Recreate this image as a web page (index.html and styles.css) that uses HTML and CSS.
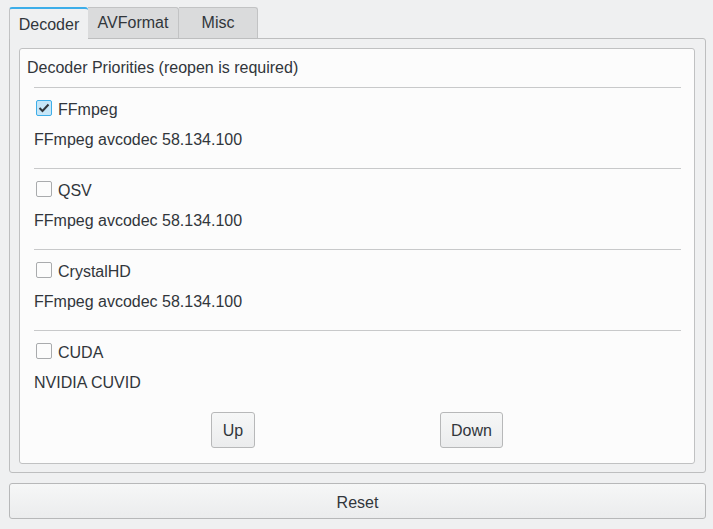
FILE: index.html
```html
<!DOCTYPE html>
<html>
<head>
<meta charset="utf-8">
<link rel="stylesheet" href="styles.css">
</head>
<body>
<div class="tabbar">
  <div class="tab active">Decoder</div>
  <div class="tab">AVFormat</div>
  <div class="tab misc">Misc</div>
</div>
<div class="panel">
  <div class="group">
    <div class="title">Decoder Priorities (reopen is required)</div>
    <div class="list">
      <div class="item">
        <div class="row"><span class="cb checked"><svg width="12" height="10" viewBox="0 0 12 10"><path d="M1.5 5 L4.5 8 L10.5 1.5" fill="none" stroke="#31363b" stroke-width="2"/></svg></span><span class="label">FFmpeg</span></div>
        <div class="desc">FFmpeg avcodec 58.134.100</div>
      </div>
      <div class="item">
        <div class="row"><span class="cb"></span><span class="label">QSV</span></div>
        <div class="desc">FFmpeg avcodec 58.134.100</div>
      </div>
      <div class="item">
        <div class="row"><span class="cb"></span><span class="label">CrystalHD</span></div>
        <div class="desc">FFmpeg avcodec 58.134.100</div>
      </div>
      <div class="item last">
        <div class="row"><span class="cb"></span><span class="label">CUDA</span></div>
        <div class="desc">NVIDIA CUVID</div>
      </div>
    </div>
    <div class="buttons">
      <button class="btn up">Up</button>
      <button class="btn down">Down</button>
    </div>
  </div>
</div>
<button class="btn reset">Reset</button>
</body>
</html>
```
FILE: styles.css
```css
html, body {
  margin: 0;
  padding: 0;
  background: #eff0f1;
  font-family: "Liberation Sans", Arial, sans-serif;
  font-size: 16px;
  color: #31363b;
}
.tabbar {
  display: flex;
  padding: 7px 0 0 9px;
  height: 31px;
}
.tab {
  height: 31px;
  box-sizing: border-box;
  padding: 0;
  width: 91px;
  display: flex;
  align-items: center;
  justify-content: center;
  background: #dadbdc;
  border: 1px solid #c2c3c4;
  border-bottom: none;
  border-left: none;
  border-radius: 0 3px 0 0;
}
.tab.active {
  width: 79px;
  background: #eff0f1;
  border-top: 2px solid #3daee9;
  border-left: 1px solid #c2c3c4;
  border-right: none;
  border-radius: 3px 3px 0 0;
  position: relative;
  z-index: 1;
  height: 32px;
  margin-bottom: -1px;
  padding-top: 1px;
}
.tab.misc {
  width: 79px;
}
.panel {
  margin: 0 7px 0 9px;
  height: 435px;
  box-sizing: border-box;
  border: 1px solid #bdbebf;
  border-radius: 0 3px 3px 3px;
  background: #eff0f1;
  padding: 9px 10px 8px 9px;
}
.group {
  height: 100%;
  box-sizing: border-box;
  background: #fcfcfc;
  border: 1px solid #c0c1c2;
  border-radius: 3px;
  padding: 8px 13px 0 14px;
}
.title {
  line-height: 22px;
  margin-left: -7px;
}
.list {
  margin-top: 8px;
}
.item {
  border-top: 1px solid #c8c9ca;
  padding: 10px 0 18px 0;
}
.item.last {
  padding-bottom: 0;
}
.row {
  display: flex;
  align-items: flex-start;
  height: 22px;
}
.label {
  line-height: 20px;
  margin-top: 2px;
}
.cb {
  width: 16px;
  height: 16px;
  box-sizing: border-box;
  border: 1px solid #a9abad;
  border-radius: 2px;
  background: #fcfcfc;
  margin: 2px 6px 0 2px;
  display: flex;
  align-items: center;
  justify-content: center;
}
.cb.checked {
  background: #c7e6f7;
  border-color: #3daee9;
}
.desc {
  margin-top: 10px;
  line-height: 20px;
}
.buttons {
  display: flex;
  margin-top: 19px;
  padding-left: 177px;
}
.btn {
  font-family: "Liberation Sans", Arial, sans-serif;
  font-size: 16px;
  color: #31363b;
  height: 36px;
  box-sizing: border-box;
  border: 1px solid #b7b8b9;
  border-radius: 3px;
  background: linear-gradient(#f6f7f7, #ebeced);
  padding: 1px 0 0 0;
}
.btn.up {
  width: 44px;
}
.btn.down {
  width: 63px;
  margin-left: 185px;
}
.btn.reset {
  display: block;
  width: 697px;
  margin: 10px 0 0 9px;
  padding-top: 3px;
}
```
